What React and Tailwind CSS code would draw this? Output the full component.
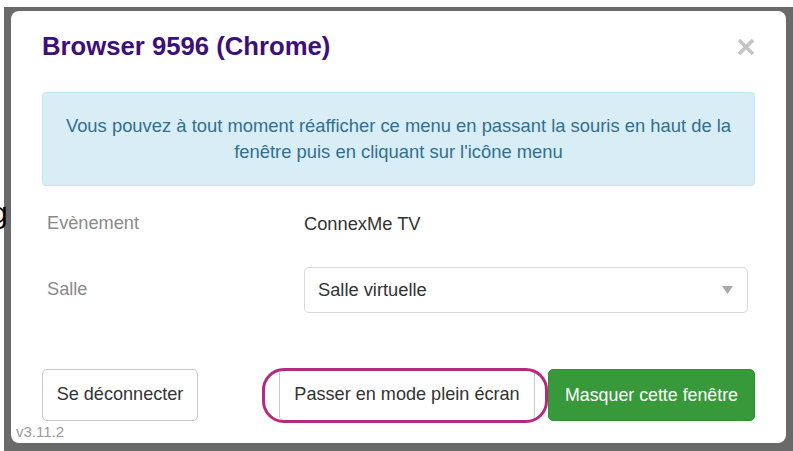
import React from "react";

const FONT = { fontFamily: '"Liberation Sans", Arial, sans-serif' };

function CloseIcon() {
  return (
    <svg width="18" height="18" viewBox="0 0 18 18" className="block">
      <path d="M2 2 L16 16 M16 2 L2 16" stroke="#c4c4c4" strokeWidth="3.6" strokeLinecap="butt" />
    </svg>
  );
}

function Row({ label, children, className }) {
  return (
    <div className={`flex items-center ${className}`}>
      <div className="w-[262px] shrink-0 pl-[5px] text-[18.2px] text-[#8a8a8a]">{label}</div>
      <div className="flex-1">{children}</div>
    </div>
  );
}

export default function App() {
  return (
    <div className="relative h-[451px] w-[793px] overflow-hidden bg-white pl-[4px] pt-[7px]" style={FONT}>
      {/* bout de texte de la page derrière */}
      <span className="absolute left-[-9px] top-[198px] text-[30px] leading-[30px] text-black">g</span>

      <div className="h-[444px] bg-[#6a6a6a] pl-[7px] pr-[7px] pt-[4px]">
        <div className="relative flex h-[432px] w-[775px] flex-col rounded-[8px] bg-white">
          {/* Header */}
          <div className="flex items-center justify-between pl-[31px] pr-[31px] pt-[20px]">
            <h1 className="text-[25.7px] font-bold leading-[30px] text-[#3d0f7a]">Browser 9596 (Chrome)</h1>
            <button className="mt-[2px]"><CloseIcon /></button>
          </div>

          <div className="px-[31px]">
            <div className="mt-[31px] h-[94px] rounded-[4px] border border-[#bce8f1] bg-[#d9edf7] px-[16px] py-[20px] text-center text-[18.4px] leading-[26px] text-[#31708f]">
              Vous pouvez à tout moment réafficher ce menu en passant la souris en haut de la fenêtre puis en cliquant sur l'icône menu
            </div>

            <Row label="Evènement" className="mt-[18px] h-[40px]">
              <span className="text-[18.3px] text-[#333]">ConnexMe TV</span>
            </Row>

            <Row label="Salle" className="mt-[23px] h-[46px]">
              <div className="mr-[7px] flex h-[46px] items-center justify-between rounded-[5px] border border-[#d9d9d9] pl-[13px] pr-[14px]">
                <span className="text-[18.3px] text-[#333]">Salle virtuelle</span>
                <svg width="11" height="8" viewBox="0 0 11 8"><path d="M0 0 H11 L5.5 8 Z" fill="#a9a9a9" /></svg>
              </div>
            </Row>

            {/* Footer */}
            <div className="mt-[56px] flex h-[52px] items-stretch">
              <button className="w-[156px] rounded-[5px] border border-[#c8c8c8] bg-white text-[18.1px] text-[#333]">
                Se déconnecter
              </button>
              <div className="flex-1" />
              <div className="relative flex">
                <button className="w-[256px] rounded-[5px] border border-[#c8c8c8] bg-white text-[18.1px] text-[#333]">
                  Passer en mode plein écran
                </button>
                <div className="pointer-events-none absolute -bottom-[2px] -left-[17px] -right-[13px] -top-[1px] rounded-[22px] border-[3.5px] border-[#b52a80]" />
              </div>
              <button className="ml-[13px] w-[207px] rounded-[5px] border border-[#2f8f32] bg-[#37993a] text-[17.8px] text-white">
                Masquer cette fenêtre
              </button>
            </div>
          </div>

          <div className="mt-[3px] pl-[5px] text-[15px] leading-[16px] text-[#9a9a9a]">v3.11.2</div>
        </div>
      </div>
    </div>
  );
}
